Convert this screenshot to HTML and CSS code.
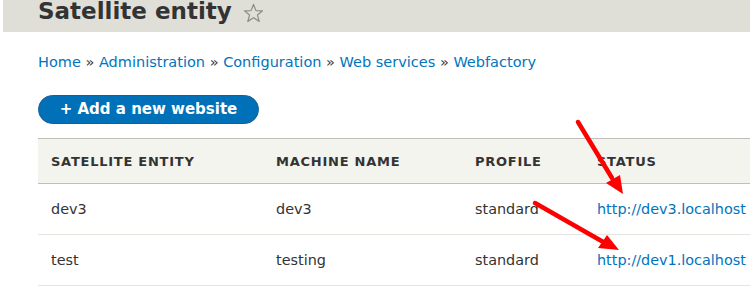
FILE: index.html
```html
<!DOCTYPE html>
<html>
<head>
<meta charset="utf-8">
<link rel="stylesheet" href="styles.css">
</head>
<body>
<div class="page">
  <header class="page-header">
    <h1 class="title">Satellite entity
      <svg class="star" width="21" height="20" viewBox="0 0 22 21"><polygon points="11,1.5 13.6,8 20.5,8.2 15.1,12.5 17,19.3 11,15.4 5,19.3 6.9,12.5 1.5,8.2 8.4,8" fill="none" stroke="#8e8e86" stroke-width="1.3" stroke-linejoin="round"/></svg>
    </h1>
  </header>
  <main class="content">
    <nav class="breadcrumb">
      <a href="#">Home</a> <span class="sep">»</span> <a href="#">Administration</a> <span class="sep">»</span> <a href="#">Configuration</a> <span class="sep">»</span> <a href="#">Web services</a> <span class="sep">»</span> <a href="#">Webfactory</a>
    </nav>
    <a class="button" href="#">+ Add a new website</a>
    <table class="list">
      <thead>
        <tr><th class="c1">Satellite entity</th><th class="c2">Machine name</th><th class="c3">Profile</th><th class="c4">Status</th></tr>
      </thead>
      <tbody>
        <tr><td>dev3</td><td>dev3</td><td>standard</td><td><a href="#">http://dev3.localhost</a></td></tr>
        <tr><td>test</td><td>testing</td><td>standard</td><td><a href="#">http://dev1.localhost</a></td></tr>
      </tbody>
    </table>
  </main>
  <svg class="arrows" width="750" height="300" viewBox="0 0 750 300">
    <line x1="578" y1="122" x2="612" y2="178" stroke="#ff0000" stroke-width="4.5" stroke-linecap="round"/>
    <polygon points="606,183 620,175 623,194" fill="#ff0000"/>
    <line x1="535" y1="203" x2="605" y2="243" stroke="#ff0000" stroke-width="4.5" stroke-linecap="round"/>
    <polygon points="598,248 607,235 619,250" fill="#ff0000"/>
  </svg>
</div>
</body>
</html>
```
FILE: styles.css
```css
html, body {
  margin: 0;
  padding: 0;
  background: #ffffff;
  overflow: hidden;
}
body {
  font-family: "DejaVu Sans", sans-serif;
  color: #333333;
}
.page {
  position: relative;
  width: 750px;
  height: 300px;
  overflow: hidden;
}
.page-header {
  margin-left: 3px;
  height: 32px;
  background: #e0dfd7;
  overflow: hidden;
  padding-left: 35px;
}
.title {
  margin: 0;
  font-size: 23px;
  line-height: 23px;
  font-weight: bold;
  color: #333333;
  white-space: nowrap;
  display: flex;
  align-items: flex-start;
  gap: 11px;
}
.star {
  margin-top: 3px;
}
.content {
  padding-left: 38px;
}
.breadcrumb {
  margin-top: 21px;
  font-size: 14.5px;
  line-height: 18px;
  white-space: nowrap;
}
.breadcrumb a {
  color: #0074bd;
  text-decoration: none;
}
.breadcrumb .sep {
  color: #333333;
}
.button {
  display: inline-block;
  margin-top: 24px;
  box-sizing: border-box;
  width: 221px;
  height: 29px;
  line-height: 27px;
  border: 1px solid #1e5c90;
  border-radius: 15px;
  background: #0071b8;
  color: #ffffff;
  font-weight: bold;
  font-size: 15px;
  text-align: center;
  text-decoration: none;
}
.list {
  margin-top: 14px;
  width: 800px;
  border-collapse: collapse;
  font-size: 14.4px;
}
.list thead tr {
  background: #f3f4ee;
  border-top: 1px solid #bfbfba;
  border-bottom: 1px solid #bfbfba;
}
.list th {
  height: 44px;
  padding: 0 0 0 13px;
  text-align: left;
  text-transform: uppercase;
  font-size: 13px;
  letter-spacing: 0.75px;
  font-weight: bold;
  color: #333333;
}
.list td {
  height: 50px;
  padding: 0 0 0 13px;
  color: #333333;
}
.list tbody tr {
  border-bottom: 1px solid #e6e4df;
}
.c1 { width: 212px; }
.c2 { width: 186px; }
.c3 { width: 109px; }
.list td a {
  color: #0074bd;
  text-decoration: none;
}
.arrows {
  position: absolute;
  left: 0;
  top: 0;
  pointer-events: none;
}
```
